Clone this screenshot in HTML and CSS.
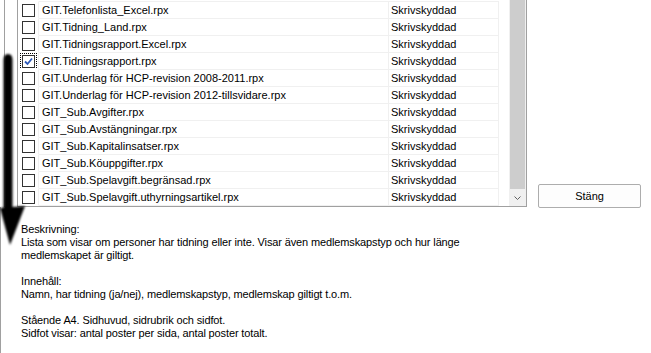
FILE: index.html
```html
<!DOCTYPE html>
<html lang="sv">
<head>
<meta charset="utf-8">
<title>Rapporter</title>
<link rel="stylesheet" href="styles.css">
</head>
<body>
<div class="screen">
  <div class="top">
    <div class="gutter"></div>
    <div class="list">
      <div class="rows">
        <div class="row"><span class="cb"><i class="box"></i></span><span class="name">GIT.Telefonlista_Excel.rpx</span><span class="status">Skrivskyddad</span><span class="rest"></span></div>
        <div class="row"><span class="cb"><i class="box"></i></span><span class="name">GIT.Tidning_Land.rpx</span><span class="status">Skrivskyddad</span><span class="rest"></span></div>
        <div class="row"><span class="cb"><i class="box"></i></span><span class="name">GIT.Tidningsrapport.Excel.rpx</span><span class="status">Skrivskyddad</span><span class="rest"></span></div>
        <div class="row"><span class="cb"><span class="focus"><i class="box checked"><svg class="tick" viewBox="0 0 11 11" width="11" height="11"><polyline points="2,5.5 4.5,8 9,2.5" fill="none" stroke="#2b58b8" stroke-width="1.8"/></svg></i></span></span><span class="name">GIT.Tidningsrapport.rpx</span><span class="status">Skrivskyddad</span><span class="rest"></span></div>
        <div class="row"><span class="cb"><i class="box"></i></span><span class="name">GIT.Underlag för HCP-revision 2008-2011.rpx</span><span class="status">Skrivskyddad</span><span class="rest"></span></div>
        <div class="row"><span class="cb"><i class="box"></i></span><span class="name">GIT.Underlag för HCP-revision 2012-tillsvidare.rpx</span><span class="status">Skrivskyddad</span><span class="rest"></span></div>
        <div class="row"><span class="cb"><i class="box"></i></span><span class="name">GIT_Sub.Avgifter.rpx</span><span class="status">Skrivskyddad</span><span class="rest"></span></div>
        <div class="row"><span class="cb"><i class="box"></i></span><span class="name">GIT_Sub.Avstängningar.rpx</span><span class="status">Skrivskyddad</span><span class="rest"></span></div>
        <div class="row"><span class="cb"><i class="box"></i></span><span class="name">GIT_Sub.Kapitalinsatser.rpx</span><span class="status">Skrivskyddad</span><span class="rest"></span></div>
        <div class="row"><span class="cb"><i class="box"></i></span><span class="name">GIT_Sub.Köuppgifter.rpx</span><span class="status">Skrivskyddad</span><span class="rest"></span></div>
        <div class="row"><span class="cb"><i class="box"></i></span><span class="name">GIT_Sub.Spelavgift.begränsad.rpx</span><span class="status">Skrivskyddad</span><span class="rest"></span></div>
        <div class="row"><span class="cb"><i class="box"></i></span><span class="name">GIT_Sub.Spelavgift.uthyrningsartikel.rpx</span><span class="status">Skrivskyddad</span><span class="rest"></span></div>
      </div>
      <div class="scrollbar">
        <div class="thumb"></div>
        <div class="sb-down"><svg viewBox="0 0 7 4" width="7" height="4"><polyline points="0.5,0.5 3.5,3.5 6.5,0.5" fill="none" stroke="#606060" stroke-width="1"/></svg></div>
      </div>
    </div>
    <div class="side"><button class="btn" type="button">Stäng</button></div>
  </div>
  <div class="desc">
    <p>Beskrivning:<br>Lista som visar om personer har tidning eller inte. Visar även medlemskapstyp och hur länge<br>medlemskapet är giltigt.</p>
    <p>Innehåll:<br>Namn, har tidning (ja/nej), medlemskapstyp, medlemskap giltigt t.o.m.</p>
    <p>Stående A4. Sidhuvud, sidrubrik och sidfot.<br>Sidfot visar: antal poster per sida, antal poster totalt.</p>
  </div>
  <svg class="annot" viewBox="0 0 32 206" width="32" height="206" aria-hidden="true">
    <defs><filter id="soft" x="-30%" y="-5%" width="160%" height="110%"><feGaussianBlur stdDeviation="0.9"/></filter></defs>
    <g filter="url(#soft)">
      <path d="M3.5,14 Q3.5,8 8,8 Q12.5,8 12.5,14 L12.5,166 L3.5,166 Z" fill="#000"/>
      <path d="M0,162 L25,160 L10,199 Z" fill="#000"/>
    </g>
  </svg>
</div>
</body>
</html>
```

FILE: styles.css
```css
* { box-sizing: border-box; }
html, body { margin: 0; padding: 0; background: #fff; }
.screen {
  position: relative;
  width: 651px;
  height: 353px;
  overflow: hidden;
  background: #fff;
  font-family: "Liberation Sans", Arial, sans-serif;
  font-size: 11px;
  color: #000;
}
.top {
  display: flex;
  height: 207px;
}
.gutter {
  flex: none;
  width: 13px;
  margin-left: 4px;
  border-left: 1px solid #a0a0a0;
}
.list {
  display: flex;
  width: 510px;
  flex: none;
  border-left: 1px solid #a0a0a0;
  border-right: 1px solid #a0a0a0;
  border-bottom: 1px solid #a0a0a0;
}
.rows {
  width: 491px;
  padding-top: 1px;
}
.row {
  display: grid;
  grid-template-columns: 21px 350px 110px 10px;
  height: 17px;
}
.row:last-child { height: 18px; }
.row > span {
  border-top: 1px solid #f0f0f0;
  line-height: 16px;
  white-space: nowrap;
  overflow: hidden;
}
.row:last-child > span { border-bottom: 1px solid #f0f0f0; }
.row > .cb {
  border-top-color: #fff;
  border-right: 1px solid #f0f0f0;
  padding: 2px 0 0 4px;
  display: flex;
  align-items: flex-start;
}
.row:last-child > .cb { border-bottom-color: #fff; }
.row > .rest { border-color: #fff; }
.row:last-child > .rest { border-bottom-color: #fff; }
.name {
  padding-left: 3px;
  border-right: 1px solid #f0f0f0;
}
.status {
  padding-left: 2px;
  border-right: 1px solid #f0f0f0;
}
.box {
  display: block;
  width: 13px;
  height: 13px;
  border: 1px solid #333;
  background: #fff;
}
.tick { display: block; }
.focus {
  display: block;
  margin: -2px 0 0 -2px;
  padding: 1px;
  border: 1px dotted #000;
}
.scrollbar {
  width: 17px;
  display: flex;
  flex-direction: column;
  background: #f0f0f0;
}
.thumb {
  flex: 1;
  margin: 0 1px;
  background: #cdcdcd;
}
.sb-down {
  height: 17px;
  display: flex;
  align-items: center;
  justify-content: center;
}
.sb-down svg { display: block; }
.side {
  flex: 1;
  display: flex;
  align-items: flex-end;
  padding-left: 11px;
}
.btn {
  width: 103px;
  height: 24px;
  margin-bottom: -1px;
  border: 1px solid #adadad;
  border-radius: 2px;
  background: #fdfdfd;
  font: inherit;
  color: #000;
  padding: 0;
}
.desc {
  height: 146px;
  padding: 16px 0 0 20px;
  line-height: 13px;
  letter-spacing: -0.13px;
  border-left: 1px solid #a0a0a0;
}
.desc p { margin: 0 0 13px 0; white-space: nowrap; }
.annot {
  position: absolute;
  left: 0;
  top: 46px;
}
```
